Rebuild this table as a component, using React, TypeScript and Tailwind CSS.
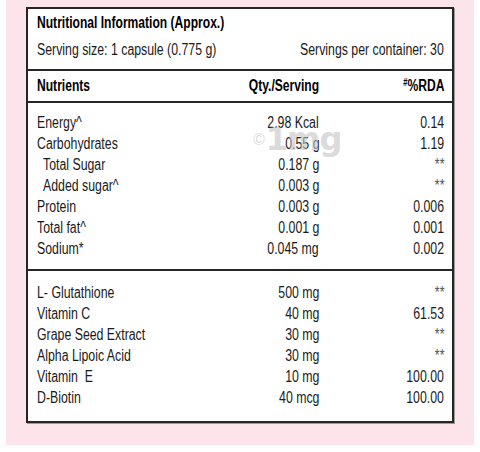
const rows1 = [
  { name: "Energy^", qty: "2.98 Kcal", rda: "0.14" },
  { name: "Carbohydrates", qty: "0.55 g", rda: "1.19" },
  { name: "Total Sugar", qty: "0.187 g", rda: "**", indent: true },
  { name: "Added sugar^", qty: "0.003 g", rda: "**", indent: true },
  { name: "Protein", qty: "0.003 g", rda: "0.006" },
  { name: "Total fat^", qty: "0.001 g", rda: "0.001" },
  { name: "Sodium*", qty: "0.045 mg", rda: "0.002" },
];

const rows2 = [
  { name: "L- Glutathione", qty: "500 mg", rda: "**" },
  { name: "Vitamin C", qty: "40 mg", rda: "61.53" },
  { name: "Grape Seed Extract", qty: "30 mg", rda: "**" },
  { name: "Alpha Lipoic Acid", qty: "30 mg", rda: "**" },
  { name: "Vitamin  E", qty: "10 mg", rda: "100.00" },
  { name: "D-Biotin", qty: "40 mcg", rda: "100.00" },
];

type Row = { name: string; qty: string; rda: string; indent?: boolean };

// the label's face is a narrow geometric sans, so squeeze Liberation Sans sideways
function L({ children, className = "" }: { children: React.ReactNode; className?: string }) {
  return (
    <span className={`inline-block shrink-0 origin-left scale-x-[0.77] whitespace-pre ${className}`}>
      {children}
    </span>
  );
}

function R({ children, className = "" }: { children: React.ReactNode; className?: string }) {
  return (
    <span className={`inline-block shrink-0 origin-right scale-x-[0.77] whitespace-pre ${className}`}>
      {children}
    </span>
  );
}

function NutrientRow({ row }: { row: Row }) {
  return (
    <div className="flex h-[21px] items-center leading-[21px]">
      <div className={`flex-1 ${row.indent ? "pl-[6px]" : ""}`}>
        <L>{row.name}</L>
      </div>
      <div className="flex w-[110px] justify-end">
        <R>{row.qty}</R>
      </div>
      <div className="flex w-[125px] justify-end">
        <R className={row.rda === "**" ? "text-[#555]" : ""}>{row.rda}</R>
      </div>
    </div>
  );
}

export default function App() {
  return (
    <div className="h-[452px] w-[480px] bg-white">
      <div className="ml-[6px] h-[445px] w-[468px] bg-[#fde4ea] px-[20px] pt-[7px]">
        <div className="relative flex h-[416px] w-[428px] flex-col border-2 border-[#262626] bg-white font-['Liberation_Sans',Arial,sans-serif] text-[16px] text-[#1a1a1a] shadow-[1px_1px_0_#9a9a9a]">
          <div className="border-b-2 border-[#262626] pr-[8px] pl-[9px] pt-[3px] pb-[8px]">
            <div className="h-[22px] leading-[22px] font-bold text-black">
              <L className="scale-x-[0.755]">Nutritional Information (Approx.)</L>
            </div>
            <div className="mt-[5px] flex h-[22px] items-center leading-[22px]">
              <div className="min-w-0 flex-1">
                <L>Serving size: 1 capsule (0.775 g)</L>
              </div>
              <div className="flex min-w-0 flex-1 justify-end">
                <R>Servings per container: 30</R>
              </div>
            </div>
          </div>

          <div className="flex h-[32px] items-center border-b-2 border-[#262626] pr-[8px] pl-[9px] font-bold text-black">
            <div className="flex-1">
              <L className="scale-x-[0.755]">Nutrients</L>
            </div>
            <div className="flex w-[110px] justify-end">
              <R className="scale-x-[0.755]">Qty./Serving</R>
            </div>
            <div className="flex w-[125px] justify-end">
              <R className="scale-x-[0.755]">
                <sup className="text-[10px]">#</sup>%RDA
              </R>
            </div>
          </div>

          <div className="border-b-2 border-[#262626] pr-[8px] pl-[9px] pt-[9px] pb-[10px]">
            {rows1.map((r) => (
              <NutrientRow key={r.name} row={r} />
            ))}
          </div>

          <div className="pr-[8px] pl-[9px] pt-[11px]">
            {rows2.map((r) => (
              <NutrientRow key={r.name} row={r} />
            ))}
          </div>

          {/* 1mg watermark over the table */}
          <div className="pointer-events-none absolute top-[114px] left-[225px] flex items-end text-[#c4c4c4] opacity-60 select-none">
            <span className="mb-[7px] text-[16px] leading-none">©</span>
            <span className="ml-[1px] font-['DejaVu_Sans',sans-serif] text-[32px] leading-none font-bold tracking-[-1px]">
              1mg
            </span>
          </div>
        </div>
      </div>
    </div>
  );
}
